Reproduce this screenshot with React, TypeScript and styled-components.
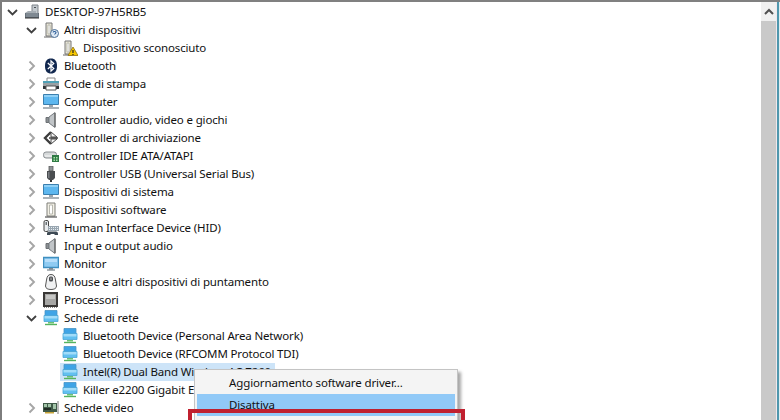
import React from "react";
import styled, { createGlobalStyle } from "styled-components";

const Global = createGlobalStyle`
  html, body { margin: 0; padding: 0; background: #fff; overflow: hidden; }
  * { box-sizing: border-box; }
`;

const Window = styled.div`
  position: relative;
  width: 780px;
  height: 420px;
  overflow: hidden;
  display: flex;
  background: #fff;
  border-top: 2px solid #808080;
  font-family: "Noto Sans", "Open Sans", sans-serif;
  font-size: 11.5px;
  color: #111;
`;
const LeftEdge = styled.div`
  width: 2px;
  flex: none;
  background: #7d7d7d;
`;
const Tree = styled.div`
  flex: 1;
  min-width: 0;
  display: flex;
  flex-direction: column;
  overflow: hidden;
  padding-top: 1px;
`;
const Row = styled.div<{ $level: number }>`
  height: 18px;
  flex: none;
  display: flex;
  align-items: center;
  padding-left: ${(p) => 4 + p.$level * 19}px;
`;
const Toggle = styled.div`
  width: 12px;
  height: 18px;
  flex: none;
  display: flex;
  align-items: center;
  justify-content: center;
  margin-right: 4px;
`;
const Item = styled.div<{ $selected?: boolean }>`
  height: 18px;
  display: flex;
  align-items: center;
  padding: 0 4px 0 2px;
  background: ${(p) => (p.$selected ? "#cde4f8" : "transparent")};
`;
const IconBox = styled.svg`
  width: 16px;
  height: 16px;
  flex: none;
  margin-right: 5px;
  display: block;
`;
const Label = styled.span`
  white-space: nowrap;
  line-height: 18px;
  letter-spacing: -0.15px;
`;
const Scrollbar = styled.div`
  width: 15px;
  flex: none;
  display: flex;
  flex-direction: column;
  background: #c9c9c9;
`;
const ScrollButton = styled.div`
  height: 19px;
  background: #f0f0f0;
  display: flex;
  align-items: center;
  justify-content: center;
`;
const RightEdge = styled.div`
  width: 4px;
  flex: none;
  display: flex;
`;
const EdgePale = styled.div`
  width: 1px;
  background: #f0e8ec;
`;
const EdgeTeal = styled.div`
  width: 2px;
  background: #4f97ad;
`;
const EdgeWhite = styled.div`
  width: 1px;
  background: #dfeef2;
`;
const Menu = styled.div`
  position: absolute;
  left: 194px;
  top: 367px;
  width: 264px;
  height: 60px;
  padding: 2px;
  background: #f4f4f4;
  border: 1px solid #c4c4c4;
  box-shadow: 3px 3px 3px rgba(0, 0, 0, 0.35);
`;
const MenuItem = styled.div<{ $active?: boolean }>`
  height: 22px;
  line-height: 22px;
  padding-left: 32px;
  background: ${(p) => (p.$active ? "#91c9f7" : "transparent")};
  letter-spacing: -0.12px;
  white-space: nowrap;
`;
const Highlight = styled.div`
  position: absolute;
  left: 188px;
  top: 407px;
  width: 277px;
  height: 40px;
  border: 4px solid #c0202f;
`;

type IconProps = { children: React.ReactNode };
const Icon = ({ children }: IconProps) => <IconBox viewBox="0 0 16 16">{children}</IconBox>;

const Tower = () => (
  <>
    <path d="M3 1h6v13H3z" fill="#e9e6d8" stroke="#777" />
    <path d="M5 3h2v9H5z" fill="#fff" stroke="#a5a39a" strokeWidth=".7" />
    <path d="M1 15h10" stroke="#666" />
  </>
);

const icons: Record<string, React.ReactNode> = {
  root: (
    <>
      <path d="M8 1h6v9H8z" fill="#c3c9ce" stroke="#7f848a" />
      <path d="M10 3h2v1h-2z" fill="#4a5056" />
      <path d="M1 9l3-2h8v3H1z" fill="#a6adb3" />
      <path d="M1 9h14v5H1z" fill="#66707a" />
      <path d="M2 10h12M2 12h12" stroke="#98a2aa" />
      <path d="M1 14h14" stroke="#333" />
    </>
  ),
  unknown: (
    <>
      <Tower />
      <circle cx="11.500" cy="11.500" r="4" fill="#dfeaf5" stroke="#4d6f96" />
      <path d="M10 10.400c.4-1.400 3-1.200 3 .2 0 1-1.400 1-1.400 2M11.600 14v.1" stroke="#2e5f9b" fill="none" strokeWidth="1.100" />
    </>
  ),
  warn: (
    <>
      <Tower />
      <path d="M11 7l5 8.500H6z" fill="#f7c800" stroke="#8b6d10" strokeWidth=".8" />
      <path d="M11 10v3M11 14v1" stroke="#222" strokeWidth="1.200" />
    </>
  ),
  bluetooth: (
    <>
      <path d="M8 .5c4 0 6 2.500 6 7.500s-2 7.500-6 7.500S2 13 2 8 4 .5 8 .5z" fill="#12284f" />
      <path d="M4.800 5l6 5.500L8 13.200V2.800l2.800 2.700-6 5.500" fill="none" stroke="#fff" strokeWidth="1.200" />
    </>
  ),
  printer: (
    <>
      <path d="M4 2h8v4H4z" fill="#fff" stroke="#8a8a8a" />
      <path d="M0 5h16v3H0z" fill="#4fa0b5" />
      <path d="M0 7h16v3H0z" fill="#9aa0a4" />
      <path d="M0 10h16v3H0z" fill="#2f3438" />
      <path d="M3 10h10v4H3z" fill="#fff" stroke="#555" />
    </>
  ),
  computer: (
    <>
      <path d="M.5 .5h15v10H.5z" fill="#5db7ef" stroke="#3b7fae" />
      <path d="M1 1h14v2H1z" fill="#8fd0f6" />
      <path d="M6 11h4v2H6z" fill="#9aa4ac" />
      <path d="M0 14h16" stroke="#87929b" strokeWidth="1.400" />
    </>
  ),
  speaker: (
    <>
      <path d="M3 5.500h3v5H3z" fill="#8a8f92" stroke="#6d7174" />
      <path d="M6 5l6-4.500v15L6 11z" fill="#c1c5c8" stroke="#777c80" />
      <path d="M12 1v14" stroke="#555" />
    </>
  ),
  storage: (
    <>
      <path d="M8 2L2 8l6 6" fill="none" stroke="#3d3d3d" strokeWidth="2.400" />
      <path d="M8 2l6 5H8zM8 14l6-5H8z" fill="#f4f4f4" stroke="#4a4a4a" />
      <path d="M6 8h9" stroke="#333" strokeWidth="1.400" />
    </>
  ),
  ide: (
    <>
      <rect x="0.500" y="4" width="13" height="6" rx="2.500" fill="#d6d9da" stroke="#8a8f92" />
      <path d="M2 8h8" stroke="#f6f6f6" />
      <path d="M9 7h7v7H9z" fill="#2f7a45" />
      <path d="M10.500 9h1.500v1.500h-1.500zM13 9h1.500v1.500H13zM10.500 11.500h1.500V13h-1.500zM13 11.500h1.500V13H13z" fill="#a8e2a8" />
    </>
  ),
  usb: (
    <>
      <path d="M6 0h4v5H6z" fill="#8e9397" stroke="#555" strokeWidth=".8" />
      <path d="M4 5h8v7l-2 2H6l-2-2z" fill="#4a4d50" />
      <path d="M5 6h1.500v6H5z" fill="#7b7f83" />
      <path d="M7 14h2v2H7z" fill="#333" />
    </>
  ),
  software: (
    <>
      <path d="M4 1h8v13H4z" fill="#f2f0e6" stroke="#7e7e78" />
      <path d="M6.500 3h3v9h-3z" fill="#fff" stroke="#a8a89e" strokeWidth=".8" />
      <path d="M2 15h12" stroke="#555" strokeWidth="1.200" />
    </>
  ),
  hid: (
    <>
      <rect x="1" y="0.500" width="4.500" height="11" rx="1.500" fill="#e9ecee" stroke="#444" />
      <path d="M2.500 2h1.500v3H2.500z" fill="#6d7478" />
      <path d="M5 6h11v5H5z" fill="#99a6b0" />
      <path d="M6 7h1v1H6zM8 7h1v1H8zM10 7h1v1h-1zM12 7h1v1h-1zM14 7h1v1h-1zM6 9h1v1H6zM8 9h1v1H8zM10 9h1v1h-1zM12 9h1v1h-1zM14 9h1v1h-1z" fill="#e6edf2" />
      <path d="M6 11.500h7c1.500 0 2 1 2 2.500v1h-3l-1-1H8l-1 1H4v-1c0-1.500 .5-2.500 2-2.500z" fill="#3e4a55" />
    </>
  ),
  monitor: (
    <>
      <path d="M.5 1.500h15v10H.5z" fill="#8fcbf2" stroke="#3f8fc0" strokeWidth="1.400" />
      <path d="M2 3h12v3H2z" fill="#b7defa" />
      <path d="M6 12h4v1.500H6z" fill="#7f8a92" />
      <path d="M4 14h8" stroke="#5f6a72" />
    </>
  ),
  mouse: (
    <>
      <path d="M8 .5c3 0 4 2 4.500 5.500l1 6c0 2.500-2.500 3.500-5.500 3.500s-5.500-1-5.500-3.500l1-6C4 2.500 5 .5 8 .5z" fill="#f0f1f2" stroke="#555" />
      <rect x="6" y="2.500" width="4" height="5" rx="1.500" fill="#4a4d50" />
      <path d="M7.500 3.500h1v2.500h-1z" fill="#bbb" />
    </>
  ),
  cpu: (
    <>
      <path d="M0 0h15v15H0z" fill="#3a3836" />
      <path d="M2 2h11v11H2z" fill="#a7a7a5" />
      <path d="M3 3h9v4H3z" fill="#c6c6c4" />
      <path d="M1 15.500h13" stroke="#8a8a88" strokeDasharray="1 1" />
    </>
  ),
  network: (
    <>
      <path d="M2 .5h12v5H2z" fill="#3fa4e6" stroke="#4a94c4" strokeWidth=".8" />
      <path d="M1 5.500h14v6H1z" fill="#62c0f0" stroke="#4aa6d8" strokeWidth=".8" />
      <path d="M1.500 6h13v2.500h-13z" fill="#a2dcf9" />
      <path d="M5 12h6v1.500H5z" fill="#6cc274" />
      <path d="M2 14.500h12" stroke="#55b35f" strokeWidth="1.400" />
    </>
  ),
  video: (
    <>
      <path d="M15 1v13" stroke="#a0a0a0" strokeWidth="1.400" />
      <path d="M0 3h14v9H0z" fill="#3f5a48" />
      <path d="M1 4h3v3H1zM5 4h3v3H5zM10 4h3v5h-3z" fill="#a2c4a8" />
      <path d="M1 8h7v2H1z" fill="#1f2b24" />
      <path d="M2 12h9v1.500H2z" fill="#c9a53a" />
    </>
  ),
};

type Node = {
  level: number;
  icon: string;
  label: string;
  toggle?: "open" | "closed";
  selected?: boolean;
};

const nodes: Node[] = [
  { level: 0, icon: "root", label: "DESKTOP-97H5RB5", toggle: "open" },
  { level: 1, icon: "unknown", label: "Altri dispositivi", toggle: "open" },
  { level: 2, icon: "warn", label: "Dispositivo sconosciuto" },
  { level: 1, icon: "bluetooth", label: "Bluetooth", toggle: "closed" },
  { level: 1, icon: "printer", label: "Code di stampa", toggle: "closed" },
  { level: 1, icon: "computer", label: "Computer", toggle: "closed" },
  { level: 1, icon: "speaker", label: "Controller audio, video e giochi", toggle: "closed" },
  { level: 1, icon: "storage", label: "Controller di archiviazione", toggle: "closed" },
  { level: 1, icon: "ide", label: "Controller IDE ATA/ATAPI", toggle: "closed" },
  { level: 1, icon: "usb", label: "Controller USB (Universal Serial Bus)", toggle: "closed" },
  { level: 1, icon: "computer", label: "Dispositivi di sistema", toggle: "closed" },
  { level: 1, icon: "software", label: "Dispositivi software", toggle: "closed" },
  { level: 1, icon: "hid", label: "Human Interface Device (HID)", toggle: "closed" },
  { level: 1, icon: "speaker", label: "Input e output audio", toggle: "closed" },
  { level: 1, icon: "monitor", label: "Monitor", toggle: "closed" },
  { level: 1, icon: "mouse", label: "Mouse e altri dispositivi di puntamento", toggle: "closed" },
  { level: 1, icon: "cpu", label: "Processori", toggle: "closed" },
  { level: 1, icon: "network", label: "Schede di rete", toggle: "open" },
  { level: 2, icon: "network", label: "Bluetooth Device (Personal Area Network)" },
  { level: 2, icon: "network", label: "Bluetooth Device (RFCOMM Protocol TDI)" },
  { level: 2, icon: "network", label: "Intel(R) Dual Band Wireless-AC 7260", selected: true },
  { level: 2, icon: "network", label: "Killer e2200 Gigabit Ethernet Controller" },
  { level: 1, icon: "video", label: "Schede video", toggle: "closed" },
];

const Chevron = ({ open }: { open: boolean }) =>
  open ? (
    <svg width="12" height="12" viewBox="0 0 12 12">
      <path d="M2 4l4.500 4.500L11 4" fill="none" stroke="#404040" strokeWidth="1.800" />
    </svg>
  ) : (
    <svg width="12" height="12" viewBox="0 0 12 12">
      <path d="M4.500 1.500L9 6l-4.500 4.500" fill="none" stroke="#a6a6a6" strokeWidth="1.900" />
    </svg>
  );

export default function App() {
  return (
    <>
      <Global />
      <Window>
        <LeftEdge />
        <Tree>
          {nodes.map((n) => (
            <Row key={n.label} $level={n.level}>
              <Toggle>{n.toggle && <Chevron open={n.toggle === "open"} />}</Toggle>
              <Item $selected={n.selected}>
                <Icon>{icons[n.icon]}</Icon>
                <Label>{n.label}</Label>
              </Item>
            </Row>
          ))}
        </Tree>
        <Scrollbar>
          <ScrollButton>
            <svg width="10" height="8" viewBox="0 0 10 8">
              <path d="M1 6l4-4 4 4" fill="none" stroke="#505050" strokeWidth="2" />
            </svg>
          </ScrollButton>
        </Scrollbar>
        <RightEdge>
          <EdgePale />
          <EdgeTeal />
          <EdgeWhite />
        </RightEdge>
        <Menu>
          <MenuItem>Aggiornamento software driver...</MenuItem>
          <MenuItem $active>Disattiva</MenuItem>
        </Menu>
        <Highlight />
      </Window>
    </>
  );
}
